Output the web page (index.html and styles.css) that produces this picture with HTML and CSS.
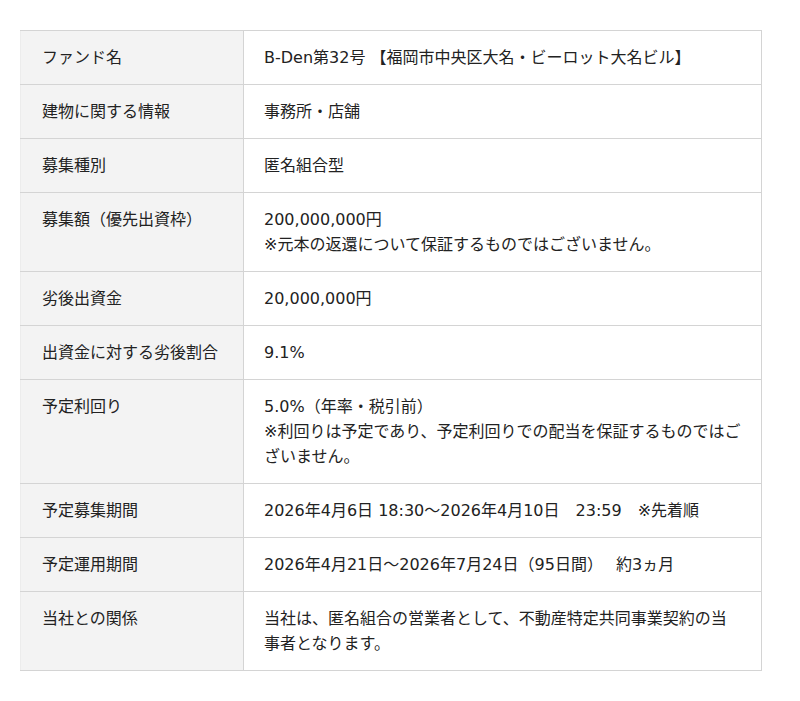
FILE: index.html
```html
<!DOCTYPE html>
<html lang="ja">
<head>
<meta charset="utf-8">
<link rel="stylesheet" href="styles.css">
</head>
<body>
<div class="wrap">
<table class="spec">
<tr><th>ファンド名</th><td>B-Den第32号 【福岡市中央区大名・ビーロット大名ビル】</td></tr>
<tr><th>建物に関する情報</th><td>事務所・店舗</td></tr>
<tr><th>募集種別</th><td>匿名組合型</td></tr>
<tr><th>募集額（優先出資枠）</th><td>200,000,000円<br>※元本の返還について保証するものではございません。</td></tr>
<tr><th>劣後出資金</th><td>20,000,000円</td></tr>
<tr><th>出資金に対する劣後割合</th><td>9.1%</td></tr>
<tr><th>予定利回り</th><td>5.0%（年率・税引前）<br>※利回りは予定であり、予定利回りでの配当を保証するものではございません。</td></tr>
<tr><th>予定募集期間</th><td>2026年4月6日 18:30～2026年4月10日　23:59　※先着順</td></tr>
<tr><th>予定運用期間</th><td>2026年4月21日～2026年7月24日（95日間）　 約3ヵ月</td></tr>
<tr><th>当社との関係</th><td>当社は、匿名組合の営業者として、不動産特定共同事業契約の当事者となります。</td></tr>
</table>
</div>
</body>
</html>
```
FILE: styles.css
```css
html, body {
  margin: 0;
  padding: 0;
  background: #fff;
}
body {
  font-family: "DejaVu Sans", "Noto Sans CJK JP", sans-serif;
  font-size: 16px;
  color: #222;
}
.wrap {
  padding: 30px 38px 30px 20px;
}
.spec {
  width: 742px;
  border-collapse: collapse;
  border: 1px solid #e6e6e6;
}
.spec th, .spec td {
  border: 1px solid #d4d4d4;
  padding: 14px 18px 14px 21px;
  line-height: 25px;
  text-align: left;
  vertical-align: top;
  font-weight: normal;
}
.spec th {
  width: 183px;
  background: #f3f3f3;
  border-left-color: #ececec;
}
.spec td {
  padding-left: 20px;
  padding-right: 20px;
}
```
